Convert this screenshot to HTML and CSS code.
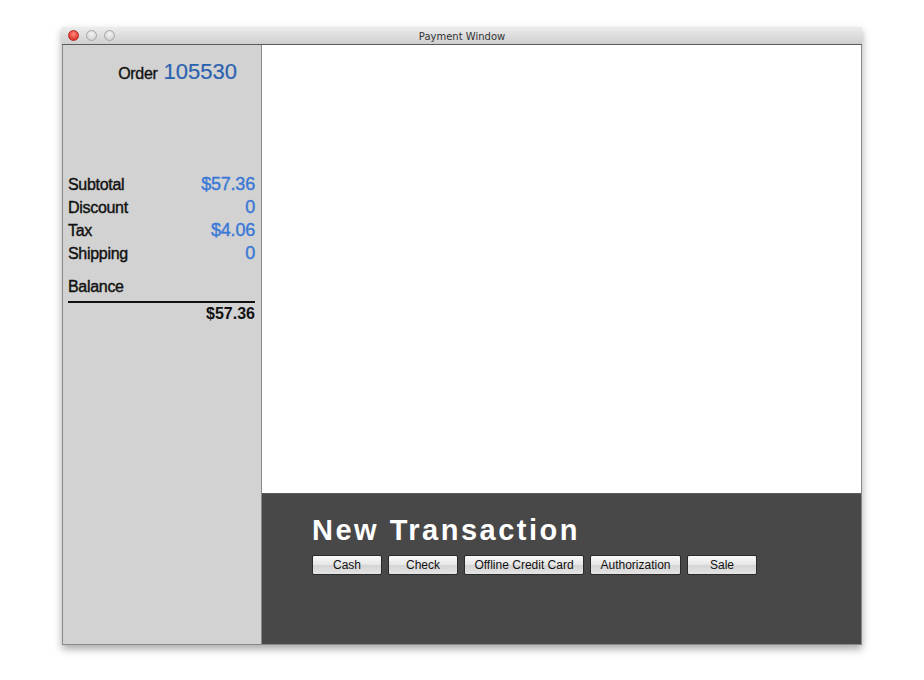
FILE: index.html
```html
<!DOCTYPE html>
<html>
<head>
<meta charset="utf-8">
<link rel="stylesheet" href="styles.css">
</head>
<body>
<div class="window">
  <div class="titlebar">
    <div class="lights">
      <span class="light red"></span>
      <span class="light"></span>
      <span class="light"></span>
    </div>
    <div class="title">Payment Window</div>
  </div>
  <div class="content">
    <div class="sidebar">
      <div class="order"><span class="order-label">Order</span><span class="order-num">105530</span></div>
      <div class="totals">
        <div class="row"><span>Subtotal</span><span class="val">$57.36</span></div>
        <div class="row"><span>Discount</span><span class="val">0</span></div>
        <div class="row"><span>Tax</span><span class="val">$4.06</span></div>
        <div class="row"><span>Shipping</span><span class="val">0</span></div>
      </div>
      <div class="balance">Balance</div>
      <div class="balance-val">$57.36</div>
    </div>
    <div class="main">
      <div class="blank"></div>
      <div class="transaction">
        <h1 class="heading">New Transaction</h1>
        <div class="buttons">
          <button class="btn w70">Cash</button>
          <button class="btn w70">Check</button>
          <button class="btn w120">Offline Credit Card</button>
          <button class="btn w91">Authorization</button>
          <button class="btn w70">Sale</button>
        </div>
      </div>
    </div>
  </div>
</div>
</body>
</html>
```
FILE: styles.css
```css
html, body {
  margin: 0;
  padding: 0;
  background: #ffffff;
}
body {
  width: 924px;
  height: 680px;
  font-family: "Liberation Sans", Arial, sans-serif;
}
.window {
  margin: 27px 0 0 62px;
  width: 800px;
  height: 618px;
  display: flex;
  flex-direction: column;
  box-shadow: 0 4px 8px rgba(0,0,0,0.35);
}
.titlebar {
  height: 17px;
  flex: none;
  position: relative;
  background: linear-gradient(#ececec, #cfcfcf);
  border-bottom: 1px solid #5a5a5a;
  display: flex;
  align-items: center;
  justify-content: center;
}
.lights {
  position: absolute;
  left: 6px;
  top: 3px;
  display: flex;
  gap: 7px;
}
.light {
  width: 11px;
  height: 11px;
  border-radius: 50%;
  box-sizing: border-box;
  border: 1px solid #a8a8a8;
  background: radial-gradient(circle at 50% 35%, #f4f4f4, #c8c8c8);
}
.light.red {
  border-color: #b22a22;
  background: radial-gradient(circle at 50% 35%, #ff8a80, #e2382d 70%);
}
.title {
  font-family: "DejaVu Sans", sans-serif;
  font-size: 10px;
  color: #333;
  padding-top: 1px;
}
.content {
  flex: 1;
  display: flex;
  border-left: 1px solid #8a8a8a;
  border-right: 1px solid #8a8a8a;
  border-bottom: 1px solid #8a8a8a;
}
.sidebar {
  width: 199px;
  flex: none;
  background: #d2d2d2;
  border-right: 1px solid #8a8a8a;
  padding: 12px 6px 0 5px;
  box-sizing: border-box;
  color: #111;
}
.order {
  text-align: right;
  padding-right: 18px;
  height: 30px;
  line-height: 30px;
}
.order-label {
  font-size: 16px;
  margin-right: 6px;
  letter-spacing: -0.3px;
  -webkit-text-stroke: 0.35px #111;
}
.order-num {
  font-size: 22px;
  color: #2b62b0;
  -webkit-text-stroke: 0.2px #2b62b0;
}
.totals {
  margin-top: 86px;
}
.row {
  display: flex;
  justify-content: space-between;
  font-size: 16px;
  line-height: 23px;
  height: 23px;
  letter-spacing: -0.3px;
  -webkit-text-stroke: 0.4px #111;
}
.val {
  color: #3a78d6;
  font-size: 18px;
  letter-spacing: -0.2px;
  -webkit-text-stroke: 0.4px #3a78d6;
}
.balance {
  font-size: 16px;
  margin-top: 12px;
  line-height: 20px;
  padding-bottom: 4px;
  border-bottom: 2px solid #111;
  letter-spacing: -0.3px;
  -webkit-text-stroke: 0.4px #111;
}
.balance-val {
  text-align: right;
  font-size: 16px;
  line-height: 22px;
  font-weight: bold;
}
.main {
  flex: 1;
  display: flex;
  flex-direction: column;
}
.blank {
  height: 448px;
  background: #ffffff;
}
.transaction {
  flex: 1;
  background: #484848;
  border-top: 1px solid #5c5c5c;
  padding: 18px 0 0 50px;
}
.heading {
  margin: 0;
  color: #ffffff;
  font-size: 29px;
  font-weight: bold;
  letter-spacing: 2.5px;
  line-height: 36px;
}
.buttons {
  display: flex;
  gap: 6px;
  margin-top: 7px;
}
.btn {
  height: 20px;
  box-sizing: border-box;
  border: 1px solid #2a2a2a;
  border-radius: 2px;
  background: linear-gradient(#fafafa, #e6e6e6 50%, #d4d4d4 51%, #e4e4e4);
  font-family: "Liberation Sans", Arial, sans-serif;
  font-size: 12px;
  color: #111;
  padding: 0;
}
.w70 { width: 70px; }
.w120 { width: 120px; }
.w91 { width: 91px; }
```
